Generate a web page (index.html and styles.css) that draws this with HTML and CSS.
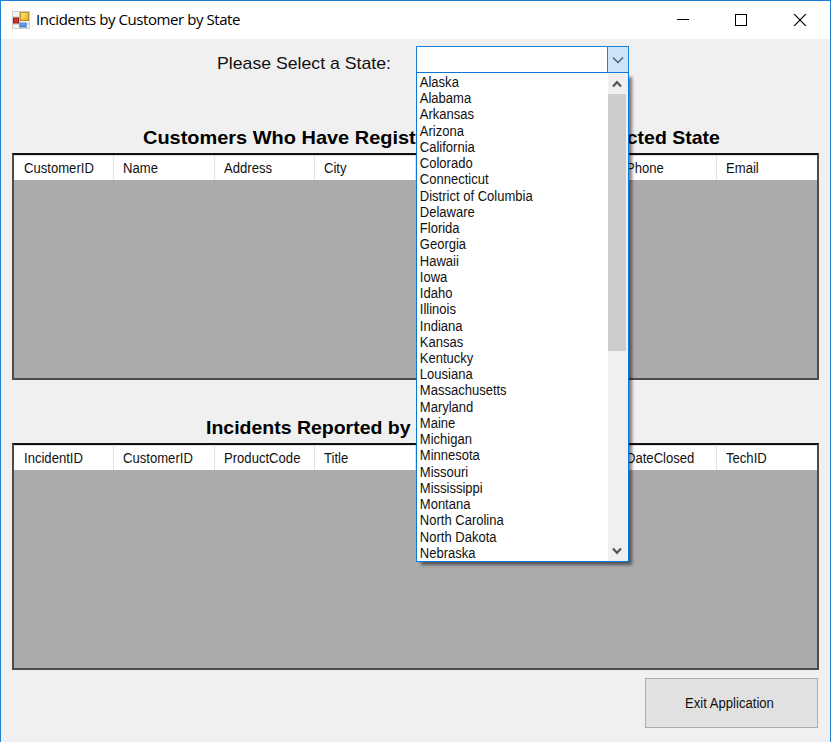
FILE: index.html
```html
<!DOCTYPE html>
<html lang="en">
<head>
<meta charset="utf-8">
<title>Incidents by Customer by State</title>
<link rel="stylesheet" href="styles.css">
</head>
<body>
<div class="window">
  <header class="titlebar">
    <svg class="app-icon" width="18" height="18" viewBox="0 0 18 18">
      <defs>
        <linearGradient id="gold" x1="0" y1="0" x2="1" y2="1"><stop offset="0" stop-color="#ffeb9a"/><stop offset="1" stop-color="#e9ab00"/></linearGradient>
        <linearGradient id="blue" x1="0" y1="0" x2="0" y2="1"><stop offset="0" stop-color="#8db8f8"/><stop offset="1" stop-color="#3f7be0"/></linearGradient>
      </defs>
      <rect x=".5" y=".5" width="17" height="17" fill="#f4f4f4" stroke="#d0d0d0"/>
      <path d="M.5 6h7M.5 13h17M7.500 .5v17M14.500 12v5" stroke="#c4c4c4" fill="none"/>
      <rect x="8.500" y="1.500" width="8" height="8" fill="url(#gold)" stroke="#b98d20"/>
      <rect x="1.500" y="7" width="5" height="5" fill="#c93636" stroke="#951b1b"/>
      <rect x="8" y="12" width="6" height="4" fill="url(#blue)" stroke="#4a7ed0"/>
    </svg>
    <span class="title">Incidents by Customer by State</span>
    <svg class="controls" width="130" height="14" viewBox="0 0 130 14" fill="none" stroke="#000">
      <path d="M0 6.500h12"/>
      <rect x="58.500" y="1.500" width="11" height="11"/>
      <path d="M117.200 1.200l11.600 11.600M128.800 1.200l-11.600 11.600" stroke-width="1.200"/>
    </svg>
  </header>
  <main class="form">
    <div class="picker">
      <label class="picker-label">Please Select a State:</label>
    </div>
    <h2 class="heading heading-customers"><span>Customers Who Have Regist</span><span>cted State</span></h2>
    <section class="grid">
      <div class="grid-head">
        <div><span>CustomerID</span></div><div><span>Name</span></div><div><span>Address</span></div><div><span>City</span></div><div></div><div></div><div><span>Phone</span></div><div><span>Email</span></div>
      </div>
    </section>
    <h2 class="heading heading-incidents"><span>Incidents Reported by</span></h2>
    <section class="grid">
      <div class="grid-head">
        <div><span>IncidentID</span></div><div><span>CustomerID</span></div><div><span>ProductCode</span></div><div><span>Title</span></div><div></div><div></div><div><span>DateClosed</span></div><div><span>TechID</span></div>
      </div>
    </section>
    <div class="actions"><button class="exit"><span>Exit Application</span></button></div>
  </main>
  <div class="combo">
    <div class="combo-box">
      <div class="combo-value"></div>
      <div class="combo-arrow"><svg width="12" height="8" viewBox="0 0 12 8"><path d="M1 1.500l5 5 5-5" fill="none" stroke="#505a62" stroke-width="1.300"/></svg></div>
    </div>
    <div class="combo-list">
      <ul>
        <li>Alaska</li><li>Alabama</li><li>Arkansas</li><li>Arizona</li><li>California</li><li>Colorado</li><li>Connecticut</li><li>District of Columbia</li><li>Delaware</li><li>Florida</li><li>Georgia</li><li>Hawaii</li><li>Iowa</li><li>Idaho</li><li>Illinois</li><li>Indiana</li><li>Kansas</li><li>Kentucky</li><li>Lousiana</li><li>Massachusetts</li><li>Maryland</li><li>Maine</li><li>Michigan</li><li>Minnesota</li><li>Missouri</li><li>Mississippi</li><li>Montana</li><li>North Carolina</li><li>North Dakota</li><li>Nebraska</li>
      </ul>
      <div class="scrollbar">
        <svg class="up" width="10" height="8" viewBox="0 0 10 8"><path d="M1 6.500L5 2.200l4 4.300" fill="none" stroke="#555" stroke-width="2.200"/></svg>
        <div class="thumb"></div>
        <svg class="down" width="10" height="8" viewBox="0 0 10 8"><path d="M1 1.500l4 4.300 4-4.300" fill="none" stroke="#555" stroke-width="2.200"/></svg>
      </div>
    </div>
  </div>
</div>
</body>
</html>
```
FILE: styles.css
```css
* { box-sizing: border-box; }
body {
  margin: 0;
  font: 14px/16px "Liberation Sans", Arial, sans-serif;
  color: #111;
  overflow: hidden;
}
.window {
  position: relative;
  height: 742px;
  border: 1px solid #1a80d8;
  border-bottom: 0;
  background: #f0f0f0;
}
.titlebar {
  display: flex;
  align-items: center;
  height: 38px;
  padding: 0 23px 0 11px;
  background: #fff;
}
.title {
  margin: -2px 0 0 6px;
  font: 15px/20px "Open Sans", sans-serif;
  letter-spacing: -0.43px;
  color: #000;
  white-space: nowrap;
}
.controls { margin-left: auto; }
.form { padding: 0 11px; }
.picker { height: 84px; padding: 15px 0 0 205px; }
.picker-label {
  display: inline-block;
  font-size: 17px;
  line-height: 20px;
  white-space: nowrap;
  transform: scaleX(1.04);
  transform-origin: 0 0;
}
.heading {
  margin: 0;
  height: 30px;
  font-size: 19px;
  line-height: 30px;
  white-space: nowrap;
  color: #000;
}
.heading > span {
  display: inline-block;
  transform: scaleX(1.025);
  transform-origin: 0 0;
}
.heading-customers {
  display: flex;
  justify-content: space-between;
  padding: 0 99px 0 131px;
}
.heading-customers > span:first-child { transform: scaleX(1.05); }
.heading-customers > span:last-child { transform-origin: 100% 0; }
.heading-incidents { height: 63px; padding: 33px 0 0 194px; }
.grid {
  width: 807px;
  height: 227px;
  border: 2px solid #4c4c4c;
  border-top-color: #111;
  background: #ababab;
}
.grid-head {
  display: grid;
  grid-template-columns: 100px 101px repeat(5, 100.4px) 1fr;
  height: 25px;
  border-top: 1px solid #ddd;
  background: #fff;
}
.grid-head div {
  padding: 4px 0 0 9px;
  border-right: 1px solid #e2e2e2;
  white-space: nowrap;
}
.grid-head div:first-child { padding-left: 10px; }
.grid-head div:last-child { border-right: 0; }
.grid-head span, .exit span {
  display: inline-block;
  transform: scaleX(.935);
  transform-origin: 0 0;
}
.actions { display: flex; justify-content: flex-end; padding: 8px 1px 0 0; }
.exit {
  width: 173px;
  height: 50px;
  padding: 0 4px 0 0;
  border: 1px solid #adadad;
  background: #e1e1e1;
  font: inherit;
  color: #111;
}
.exit span { transform-origin: 50% 0; }
.combo { position: absolute; left: 415px; top: 45px; width: 213px; }
.combo-box {
  display: flex;
  height: 27px;
  border: 1px solid #1a80d8;
  background: #fff;
}
.combo-value { flex: 1; }
.combo-arrow {
  display: flex;
  align-items: center;
  justify-content: center;
  width: 21px;
  padding-right: 1px;
  border-left: 1px solid #3c7fb1;
  background: #cce4f7;
}
.combo-list {
  display: flex;
  height: 490px;
  margin-top: -1px;
  border: 1px solid #0c78d6;
  background: #fff;
  box-shadow: 4px 4px 3px -1px rgba(0, 0, 0, .5);
}
.combo-list ul {
  flex: 1;
  margin: 0;
  padding: 1px 0 0 3px;
  list-style: none;
  line-height: 16.24px;
  transform: scaleX(.93);
  transform-origin: 0 0;
}
.scrollbar {
  display: flex;
  flex-direction: column;
  align-items: center;
  width: 20px;
  padding: 7px 2px 6px 0;
  background: #f0f0f0;
}
.thumb { width: 18px; height: 257px; margin-top: 6px; background: #cdcdcd; }
.down { margin-top: auto; }
```
